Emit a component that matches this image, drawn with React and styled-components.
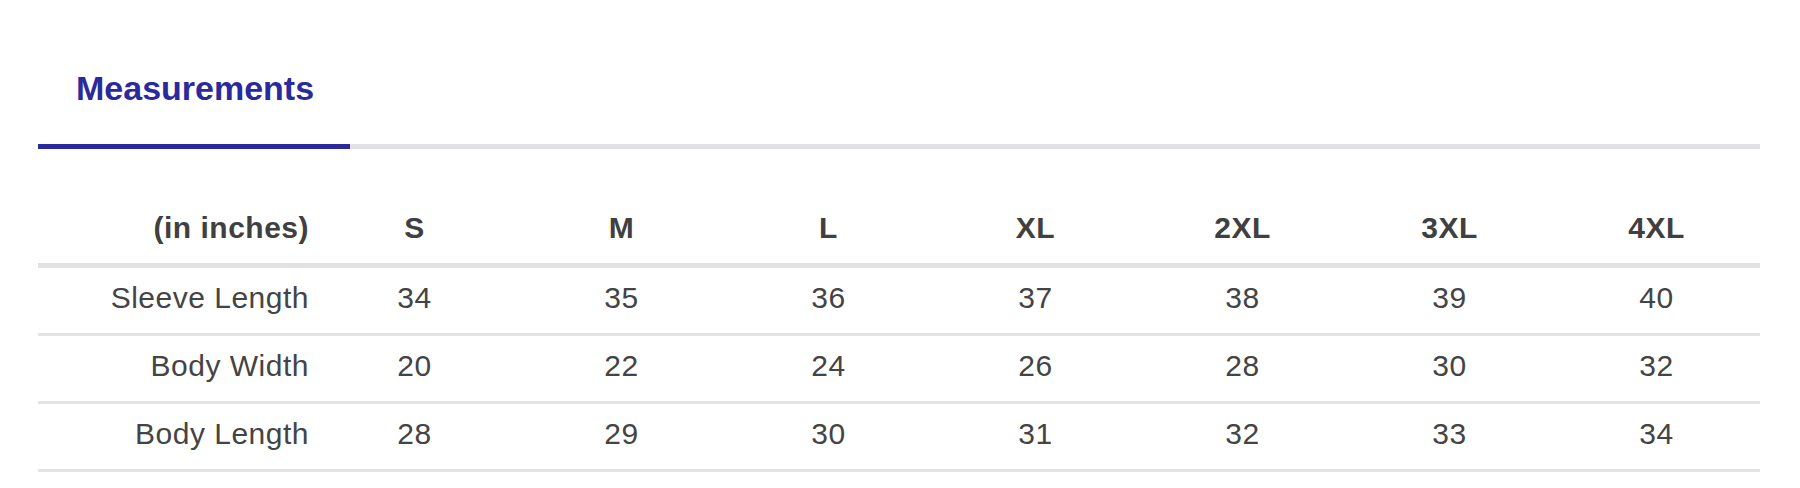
import { styled, createGlobalStyle } from 'styled-components';

const GlobalStyle = createGlobalStyle`
	body {
		margin: 0;
		background: #ffffff;
		font-family: 'Liberation Sans', Arial, Helvetica, sans-serif;
	}
`;

const SIZES = ['S', 'M', 'L', 'XL', '2XL', '3XL', '4XL'];

const ROWS = [
	{ label: 'Sleeve Length', values: [34, 35, 36, 37, 38, 39, 40] },
	{ label: 'Body Width', values: [20, 22, 24, 26, 28, 30, 32] },
	{ label: 'Body Length', values: [28, 29, 30, 31, 32, 33, 34] },
];

const Page = styled.div`
	padding: 0 40px 0 38px;
	width: 1722px;
`;

const TabBar = styled.div`
	display: flex;
	border-bottom: 5px solid #e2e2e6;
`;

const Tab = styled.div`
	padding: 68px 38px 36px;
	width: 312px;
	box-sizing: border-box;
	margin-bottom: -5px;
	border-bottom: 5px solid ${(p) => (p.$active ? '#2b2a9c' : 'transparent')};
	color: #2b2a9c;
	font-size: 34px;
	line-height: 40px;
	font-weight: 700;
	white-space: nowrap;
`;

const Table = styled.table`
	margin-top: 44px;
	width: 100%;
	border-collapse: collapse;
	table-layout: fixed;
	color: #444444;
	font-size: 30px;
	line-height: 30px;
	letter-spacing: 0.5px;
`;

const HeadCell = styled.th`
	padding: 20px ${(p) => (p.$label ? '2px' : '0')} 20px 0;
	text-align: ${(p) => (p.$label ? 'right' : 'center')};
	font-weight: 700;
	color: #404040;
	border-bottom: 5px solid #e2e2e6;
`;

const Cell = styled.td`
	padding: 15px ${(p) => (p.$label ? '2px' : '0')} 20px 0;
	text-align: ${(p) => (p.$label ? 'right' : 'center')};
	font-weight: 400;
	border-bottom: 3px solid #e4e4e8;
	white-space: nowrap;
`;

export default function App() {
	return (
		<Page>
			<GlobalStyle />
			<TabBar>
				<Tab $active>Measurements</Tab>
			</TabBar>
			<Table>
				<colgroup>
					<col style={{ width: '273px' }} />
					{SIZES.map((s) => (
						<col key={s} />
					))}
				</colgroup>
				<thead>
					<tr>
						<HeadCell $label>(in inches)</HeadCell>
						{SIZES.map((s) => (
							<HeadCell key={s}>{s}</HeadCell>
						))}
					</tr>
				</thead>
				<tbody>
					{ROWS.map((row) => (
						<tr key={row.label}>
							<Cell $label>{row.label}</Cell>
							{row.values.map((v, i) => (
								<Cell key={i}>{v}</Cell>
							))}
						</tr>
					))}
				</tbody>
			</Table>
		</Page>
	);
}
